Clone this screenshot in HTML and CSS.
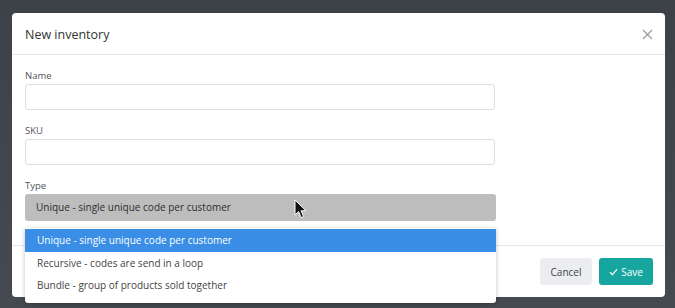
FILE: index.html
```html
<!DOCTYPE html>
<html lang="en">
<head>
    <meta charset="UTF-8">
    <meta name="viewport" content="width=device-width, initial-scale=1.0">
    <title>New inventory</title>
    <link rel="stylesheet" href="styles.css">
</head>
<body>
    <div class="backdrop">
        <div class="modal">
            <div class="modal-header">
                <div class="modal-title">New inventory</div>
                <svg class="close" width="11" height="11" viewBox="0 0 11 11">
                    <path d="M1 1 L10 10 M10 1 L1 10" stroke="#9a9a9a" stroke-width="1.2" fill="none"/>
                </svg>
            </div>

            <div class="modal-body">
                <div class="field">
                    <label class="label">Name</label>
                    <div class="input"></div>
                </div>
                <div class="field">
                    <label class="label">SKU</label>
                    <div class="input"></div>
                </div>
                <div class="field type-field">
                    <label class="label">Type</label>
                    <div class="select">Unique - single unique code per customer</div>

                    <!-- offene Auswahlliste -->
                    <ul class="dropdown">
                        <li class="option active">Unique - single unique code per customer</li>
                        <li class="option">Recursive - codes are send in a loop</li>
                        <li class="option">Bundle - group of products sold together</li>
                    </ul>

                    <svg class="cursor" width="14" height="20" viewBox="0 0 14 20">
                        <path d="M1 1 L1 16 L4.6 12.6 L7.2 18.6 L9.6 17.6 L7 11.8 L12 11.8 Z" fill="#111" stroke="#fff" stroke-width="1"/>
                    </svg>
                </div>
            </div>

            <div class="modal-footer">
                <button class="btn btn-cancel">Cancel</button>
                <button class="btn btn-save">
                    <svg width="9" height="8" viewBox="0 0 9 8">
                        <path d="M1 4.2 L3.4 6.6 L8 1.4" stroke="#fff" stroke-width="1.3" fill="none"/>
                    </svg>
                    Save
                </button>
            </div>
        </div>
    </div>
</body>
</html>
```

FILE: styles.css
```css
* {
    box-sizing: border-box;
}

body {
    margin: 0;
    font-family: "Open Sans", "Liberation Sans", sans-serif;
    background-color: #41454c;
    width: 675px;
    height: 308px;
    overflow: hidden;
}

.backdrop {
    padding: 13px 10px 0 12px;
    height: 308px;
    background: linear-gradient(#3d4148, #454950);
}

.modal {
    width: 653px;
    height: 284px;
    background: white;
    border-radius: 4px;
    display: flex;
    flex-direction: column;
}

.modal-header {
    height: 42px;
    padding: 0 12px 0 13px;
    border-bottom: 1px solid #e7e7e7;
    display: flex;
    align-items: center;
    justify-content: space-between;
}

.modal-title {
    font-size: 12.5px;
    font-weight: 500;
    color: #333;
    padding-top: 2px;
}

.close {
    margin-top: 2px;
}

.modal-body {
    height: 190px;
    padding: 14px 13px 0 13px;
}

.field {
    margin-bottom: 14px;
}

.type-field {
    position: relative;
    margin-bottom: 0;
}

.label {
    display: block;
    height: 15px;
    font-size: 9.5px;
    color: #555;
    line-height: 14px;
}

.input {
    width: 470px;
    height: 26px;
    border: 1px solid #dedede;
    border-radius: 3px;
}

.select {
    width: 471px;
    height: 27px;
    background-color: #bdbdbd;
    border-radius: 3px;
    padding-left: 11px;
    font-size: 10px;
    font-weight: 500;
    color: #2e2e2e;
    line-height: 27px;
}

.dropdown {
    position: absolute;
    top: 49px;
    left: 0;
    width: 471px;
    margin: 0;
    padding: 1px 0 6px 0;
    list-style: none;
    background: white;
    border-radius: 0 0 3px 3px;
    box-shadow: 0 1px 4px rgba(0, 0, 0, 0.25);
    z-index: 10;
}

.option {
    height: 22.5px;
    line-height: 22px;
    padding-left: 12px;
    font-size: 10px;
    color: #444;
}

.option.active {
    background-color: #3a8ee6;
    color: white;
}

.cursor {
    position: absolute;
    top: 20px;
    left: 269px;
}

.modal-footer {
    flex: 1;
    border-top: 1px solid #e7e7e7;
    display: flex;
    justify-content: flex-end;
    align-items: center;
    gap: 7px;
    padding: 0 12px 0 0;
}

.btn {
    height: 27px;
    border: none;
    border-radius: 3px;
    font-family: "Open Sans", "Liberation Sans", sans-serif;
    font-size: 10px;
    cursor: pointer;
}

.btn-cancel {
    width: 52px;
    background-color: #ebedf0;
    color: #444;
}

.btn-save {
    width: 54px;
    background-color: #17a5a0;
    color: white;
    display: flex;
    align-items: center;
    justify-content: center;
    gap: 3px;
}
```
